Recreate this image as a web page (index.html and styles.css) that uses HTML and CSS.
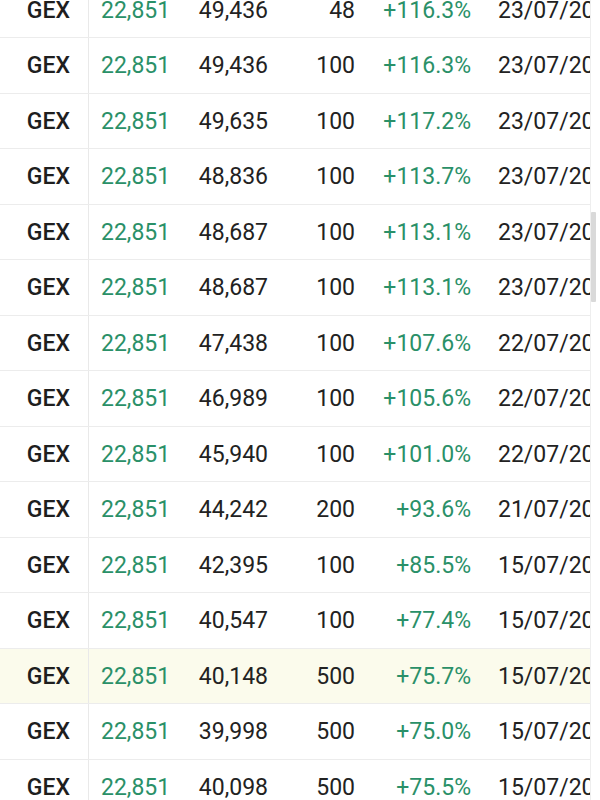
FILE: index.html
```html
<!DOCTYPE html>
<html>
<head>
<meta charset="utf-8">
<link rel="stylesheet" href="styles.css">
</head>
<body>
<div class="screen">
  <div class="list">
    <div class="table">
      <div class="row"><div class="c sym">GEX</div><div class="c price">22,851</div><div class="c cost">49,436</div><div class="c qty">48</div><div class="c pct">+116.3%</div><div class="c date">23/07/2024</div></div>
      <div class="row"><div class="c sym">GEX</div><div class="c price">22,851</div><div class="c cost">49,436</div><div class="c qty">100</div><div class="c pct">+116.3%</div><div class="c date">23/07/2024</div></div>
      <div class="row"><div class="c sym">GEX</div><div class="c price">22,851</div><div class="c cost">49,635</div><div class="c qty">100</div><div class="c pct">+117.2%</div><div class="c date">23/07/2024</div></div>
      <div class="row"><div class="c sym">GEX</div><div class="c price">22,851</div><div class="c cost">48,836</div><div class="c qty">100</div><div class="c pct">+113.7%</div><div class="c date">23/07/2024</div></div>
      <div class="row"><div class="c sym">GEX</div><div class="c price">22,851</div><div class="c cost">48,687</div><div class="c qty">100</div><div class="c pct">+113.1%</div><div class="c date">23/07/2024</div></div>
      <div class="row"><div class="c sym">GEX</div><div class="c price">22,851</div><div class="c cost">48,687</div><div class="c qty">100</div><div class="c pct">+113.1%</div><div class="c date">23/07/2024</div></div>
      <div class="row"><div class="c sym">GEX</div><div class="c price">22,851</div><div class="c cost">47,438</div><div class="c qty">100</div><div class="c pct">+107.6%</div><div class="c date">22/07/2024</div></div>
      <div class="row"><div class="c sym">GEX</div><div class="c price">22,851</div><div class="c cost">46,989</div><div class="c qty">100</div><div class="c pct">+105.6%</div><div class="c date">22/07/2024</div></div>
      <div class="row"><div class="c sym">GEX</div><div class="c price">22,851</div><div class="c cost">45,940</div><div class="c qty">100</div><div class="c pct">+101.0%</div><div class="c date">22/07/2024</div></div>
      <div class="row"><div class="c sym">GEX</div><div class="c price">22,851</div><div class="c cost">44,242</div><div class="c qty">200</div><div class="c pct">+93.6%</div><div class="c date">21/07/2024</div></div>
      <div class="row"><div class="c sym">GEX</div><div class="c price">22,851</div><div class="c cost">42,395</div><div class="c qty">100</div><div class="c pct">+85.5%</div><div class="c date">15/07/2024</div></div>
      <div class="row"><div class="c sym">GEX</div><div class="c price">22,851</div><div class="c cost">40,547</div><div class="c qty">100</div><div class="c pct">+77.4%</div><div class="c date">15/07/2024</div></div>
      <div class="row hl"><div class="c sym">GEX</div><div class="c price">22,851</div><div class="c cost">40,148</div><div class="c qty">500</div><div class="c pct">+75.7%</div><div class="c date">15/07/2024</div></div>
      <div class="row"><div class="c sym">GEX</div><div class="c price">22,851</div><div class="c cost">39,998</div><div class="c qty">500</div><div class="c pct">+75.0%</div><div class="c date">15/07/2024</div></div>
      <div class="row"><div class="c sym">GEX</div><div class="c price">22,851</div><div class="c cost">40,098</div><div class="c qty">500</div><div class="c pct">+75.5%</div><div class="c date">15/07/2024</div></div>
    </div>
  </div>
  <div class="scrollbar"><div class="thumb"></div></div>
</div>
</body>
</html>
```

FILE: styles.css
```css
html, body {
  margin: 0;
  padding: 0;
  background: #fff;
}
.screen {
  display: flex;
  width: 600px;
  height: 800px;
  overflow: hidden;
  font-family: Roboto, "Noto Sans", sans-serif;
  font-size: 23px;
  color: #222;
}
.list {
  width: 590px;
  flex: 0 0 590px;
  overflow: hidden;
}
.table {
  margin-top: -17.5px;
}
.row {
  display: grid;
  grid-template-columns: 89px 90px 89px 87px 116px 200px;
  height: 54.5px;
  border-bottom: 1px solid #ececec;
  align-items: stretch;
}
.row.hl {
  background: #fbfbec;
}
.c {
  display: flex;
  align-items: center;
  white-space: nowrap;
  padding-top: 1px;
}
.sym {
  justify-content: flex-end;
  padding-right: 18px;
  border-right: 1px solid #e9e9e9;
  font-weight: 500;
  color: #1e1e1e;
}
.price {
  color: #2a9068;
  padding-left: 12px;
}
.cost, .qty {
  justify-content: flex-end;
}
.pct {
  justify-content: flex-end;
  color: #2a9068;
}
.date {
  padding-left: 27px;
}
.scrollbar {
  position: relative;
  flex: 0 0 10px;
  border-left: 1px solid #eeeeee;
  background: #fff;
}
.thumb {
  position: absolute;
  left: 0;
  top: 212px;
  width: 5px;
  height: 90px;
  background: #d9d9d9;
  border-radius: 1px;
}
```
